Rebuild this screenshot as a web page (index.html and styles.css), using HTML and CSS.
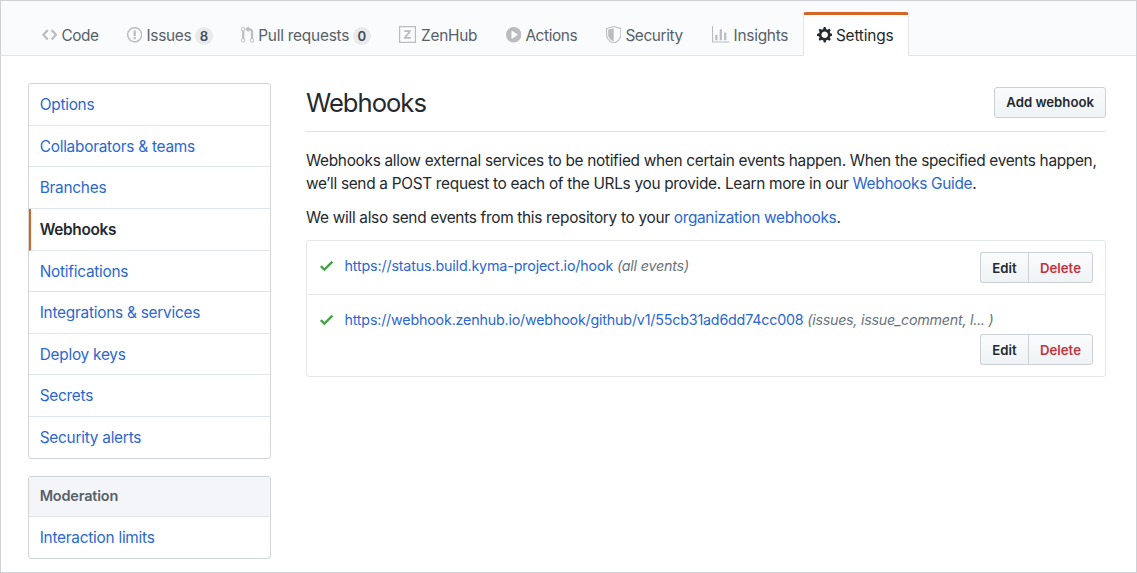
FILE: index.html
```html
<!DOCTYPE html>
<html lang="en">
<head>
<meta charset="utf-8">
<title>Webhooks</title>
<link rel="stylesheet" href="styles.css">
</head>
<body>
<div class="page">
  <nav class="tabs">
    <a class="tab tab-code"><svg class="icon" width="15.4" height="17.6" viewBox="0 0 14 16"><path d="M9.5 3L8 4.5 11.5 8 8 11.5 9.5 13 14 8 9.500 3zm-5 0L0 8l4.500 5L6 11.500 2.500 8 6 4.500 4.500 3z"/></svg><span>Code</span></a>
    <a class="tab tab-issues"><svg class="icon" width="15.4" height="17.6" viewBox="0 0 14 16"><path d="M7 2.300c3.140 0 5.700 2.560 5.700 5.700s-2.560 5.700-5.700 5.700A5.710 5.710 0 0 1 1.300 8c0-3.140 2.560-5.700 5.700-5.700zM7 1C3.140 1 0 4.140 0 8s3.140 7 7 7 7-3.140 7-7-3.140-7-7-7zm1 3H6v5h2V4zm0 6H6v2h2v-2z"/></svg><span>Issues</span><span class="count">8</span></a>
    <a class="tab tab-pulls"><svg class="icon" width="13.2" height="17.6" viewBox="0 0 12 16"><path d="M11 11.280V5c-.030-.780-.340-1.470-.940-2.060C9.460 2.350 8.780 2.030 8 2H7V0L4 3l3 3V4h1c.270.020.480.110.690.310.210.200.300.420.310.690v6.280A1.993 1.993 0 0 0 10 15a1.993 1.993 0 0 0 1-3.720zm-1 2.920c-.660 0-1.200-.550-1.200-1.200 0-.650.550-1.200 1.200-1.200.650 0 1.200.550 1.200 1.200 0 .650-.550 1.200-1.200 1.200zM4 3c0-1.110-.890-2-2-2a1.993 1.993 0 0 0-1 3.720v6.560A1.993 1.993 0 0 0 2 15a1.993 1.993 0 0 0 1-3.720V4.720c.590-.340 1-.980 1-1.720zm-.800 10c0 .660-.550 1.200-1.200 1.200-.650 0-1.200-.550-1.200-1.200 0-.650.550-1.200 1.200-1.200.650 0 1.200.550 1.200 1.200zM2 4.200C1.340 4.200.8 3.650.8 3c0-.650.550-1.200 1.200-1.200.650 0 1.200.550 1.200 1.200 0 .650-.550 1.200-1.200 1.200z"/></svg><span>Pull requests</span><span class="count">0</span></a>
    <a class="tab tab-zenhub"><svg class="icon" width="17" height="17" viewBox="0 0 17 17"><path d="M0 0h17v17H0zM1.200 1.200v14.600h14.600V1.200z" fill-rule="evenodd"/><path d="M5.300 4.200h6.500v1.500L7.500 11.100h4.400v1.700H5v-1.500l4.300-5.400h-4z"/></svg><span>ZenHub</span></a>
    <a class="tab tab-actions"><svg class="icon" width="15.4" height="17.6" viewBox="0 0 14 16"><path d="M14 8A7 7 0 1 1 0 8a7 7 0 0 1 14 0zm-8.223 3.482l4.599-3.066a.500.500 0 0 0 0-.832L5.777 4.518A.5.500 0 0 0 5 4.934v6.132a.500.500 0 0 0 .777.416z" fill-rule="evenodd"/></svg><span>Actions</span></a>
    <a class="tab tab-security"><svg class="icon" width="15.4" height="17.6" viewBox="0 0 14 16"><path d="M0 2l7-2 7 2v6.020C14 12.690 8.690 16 7 16c-1.690 0-7-3.310-7-7.980V2zm1 .750L7 1l6 1.750v5.268C13 12.104 8.449 15 7 15c-1.449 0-6-2.896-6-6.982V2.750zm1 .750L7 2v12c-1.207 0-5-2.482-5-5.985V3.500z" fill-rule="evenodd"/></svg><span>Security</span></a>
    <a class="tab tab-insights"><svg class="icon" width="17.6" height="17.6" viewBox="0 0 16 16"><path d="M16 14v1H0V0h1v14h15zM5 13H3V8h2v5zm4 0H7V3h2v10zm4 0h-2V6h2v7z"/></svg><span>Insights</span></a>
    <a class="tab tab-settings"><svg class="icon" width="15.4" height="17.6" viewBox="0 0 14 16"><path d="M14 8.770v-1.600l-1.940-.640-.450-1.090.880-1.840-1.130-1.130-1.810.910-1.090-.450-.690-1.920h-1.600l-.630 1.940-1.110.450-1.840-.880-1.130 1.130.910 1.810-.450 1.090L0 7.230v1.590l1.940.640.450 1.090-.880 1.840 1.130 1.130 1.810-.910 1.090.450.690 1.920h1.590l.630-1.940 1.110-.450 1.840.880 1.130-1.130-.920-1.810.470-1.090L14 8.750v.020zM7 11c-1.660 0-3-1.340-3-3s1.340-3 3-3 3 1.340 3 3-1.340 3-3 3z"/></svg><span>Settings</span></a>
  </nav>
  <div class="layout">
    <aside class="sidebar">
      <div class="menu">
        <a class="item">Options</a>
        <a class="item">Collaborators &amp; teams</a>
        <a class="item">Branches</a>
        <a class="item current">Webhooks</a>
        <a class="item">Notifications</a>
        <a class="item">Integrations &amp; services</a>
        <a class="item">Deploy keys</a>
        <a class="item">Secrets</a>
        <a class="item">Security alerts</a>
      </div>
      <div class="menu">
        <div class="item heading">Moderation</div>
        <a class="item">Interaction limits</a>
      </div>
    </aside>
    <main class="content">
      <header class="subhead">
        <h1>Webhooks</h1>
        <button class="btn">Add webhook</button>
      </header>
      <p>Webhooks allow external services to be notified when certain events happen. When the specified events happen,<br>we’ll send a POST request to each of the URLs you provide. Learn more in our <a>Webhooks Guide</a>.</p>
      <p>We will also send events from this repository to your <a>organization webhooks</a>.</p>
      <ul class="hooks">
        <li class="hook">
          <svg class="check" width="13.2" height="17.6" viewBox="0 0 12 16"><path d="M12 5l-8 8-4-4 1.500-1.500L4 10l6.500-6.500L12 5z"/></svg>
          <div class="hook-text"><a class="url">https://status.build.kyma-project.io/hook</a> <em>(all events)</em></div>
          <div class="group"><button class="btn">Edit</button><button class="btn danger">Delete</button></div>
        </li>
        <li class="hook stacked">
          <svg class="check" width="13.2" height="17.6" viewBox="0 0 12 16"><path d="M12 5l-8 8-4-4 1.500-1.500L4 10l6.500-6.500L12 5z"/></svg>
          <div class="hook-text"><a class="url">https://webhook.zenhub.io/webhook/github/v1/55cb31ad6dd74cc008</a> <em>(issues, issue_comment, l... )</em></div>
          <div class="group"><button class="btn">Edit</button><button class="btn danger">Delete</button></div>
        </li>
      </ul>
    </main>
  </div>
</div>
</body>
</html>
```
FILE: styles.css
```css
* { box-sizing: border-box; }

body {
  margin: 0;
  font: 15.4px/23px Inter, "Liberation Sans", sans-serif;
  letter-spacing: -0.25px;
  color: #24292e;
  background: #fff;
}

.page {
  height: 573px;
  border: 1px solid #d0d1d4;
  overflow: hidden;
}

.tabs {
  display: flex;
  align-items: flex-end;
  height: 55px;
  padding-left: 27px;
  background: #fafbfc;
  border-bottom: 1px solid #e1e4e8;
}

.tab {
  display: flex;
  align-items: center;
  flex: none;
  height: 44px;
  padding: 2px 0 0 14px;
  margin-bottom: -1px;
  color: #586069;
  white-space: nowrap;
}

.icon {
  flex: none;
  margin: -1px 4px 0 0;
  fill: #babcbf;
}

.tab-code { width: 84px; letter-spacing: -0.4px; }
.tab-issues { width: 114px; padding-left: 15px; }
.tab-pulls { width: 158px; padding-left: 15px; letter-spacing: -0.22px; }
.tab-zenhub { width: 107px; padding-left: 15px; }
.tab-zenhub .icon { margin-right: 5px; }
.tab-actions { width: 100px; padding-left: 15px; letter-spacing: -0.4px; }
.tab-security { width: 106px; padding-left: 15px; letter-spacing: -0.4px; }
.tab-insights { width: 106px; padding-left: 15px; }
.tab-settings {
  width: 106px;
  height: 44px;
  padding: 0 0 1px 13px;
  color: #24292e;
  background: #fff;
  border: solid #e1e4e8;
  border-width: 3px 1px 0;
  border-top-color: #d66424;
  border-radius: 3px 3px 0 0;
  letter-spacing: -0.18px;
}
.tab-settings .icon { margin-right: 3.5px; fill: #24292e; }

.count {
  width: 18px;
  height: 18px;
  margin: 1px 0 0 3.5px;
  border-radius: 9px;
  background: #e9eaec;
  color: #444d56;
  font-size: 13.2px;
  font-weight: 600;
  line-height: 18px;
  text-align: center;
}

.layout {
  display: flex;
  gap: 35px;
  padding: 27px 30px 0 27px;
}

.sidebar { width: 243px; flex: none; }

.menu {
  margin-bottom: 17px;
  border: 1px solid #d1d5da;
  border-radius: 3px;
  overflow: hidden;
}

.item {
  display: block;
  height: 41.65px;
  padding: 9px 10.7px 0;
  border-bottom: 1px solid #e1e4e8;
  color: #2b67cf;
}
.item:last-child { height: 40.8px; border-bottom: 0; }

.current {
  padding-left: 8.7px;
  border-left: 2px solid #d66424;
  color: #24292e;
  font-weight: 600;
  letter-spacing: -0.32px;
}

.heading {
  height: 40px;
  padding-top: 7px;
  background: #f3f5f8;
  color: #586069;
  font-size: 14.5px;
  font-weight: 600;
  letter-spacing: -0.2px;
}

.content { flex: 1; min-width: 0; }

.subhead {
  display: flex;
  justify-content: space-between;
  height: 49px;
  margin-bottom: 17px;
  padding-top: 4px;
  border-bottom: 1px solid #e1e4e8;
}

h1 {
  margin: 0;
  font-size: 25.6px;
  font-weight: 400;
  line-height: 32px;
  letter-spacing: -1px;
}

p { margin: 0 0 11px; white-space: nowrap; letter-spacing: -0.305px; }

a { color: #2b67cf; }

.btn {
  height: 31px;
  padding: 0 11px;
  border: 1px solid #cdd0d4;
  border-radius: 3px;
  background: linear-gradient(#fafbfc, #eff3f6);
  color: #24292e;
  font: 600 13.2px/20px Inter, sans-serif;
}
.subhead .btn { padding-bottom: 2px; }

.hooks {
  margin: 0;
  padding: 0;
  border: 1px solid #e6e7e9;
  border-radius: 3px;
  list-style: none;
}

.hook {
  display: flex;
  height: 53px;
  padding: 11px 12px 0 13px;
  font-size: 14.3px;
}
.hook + .hook { border-top: 1px solid #e6e7e9; }

.check { flex: none; margin: 5px 11.3px 0 0; fill: #45a048; }

.hook-text { flex: 1; margin-top: 2px; white-space: nowrap; }

em { color: #6a737d; letter-spacing: -0.2px; }

.url { letter-spacing: -0.16px; }
.stacked .url { letter-spacing: -0.2px; }
.stacked em { letter-spacing: -0.27px; }

.group { display: flex; }
.group .btn:first-child { width: 48px; border-right: 0; border-radius: 3px 0 0 3px; }
.group .btn:last-child { width: 65px; border-radius: 0 3px 3px 0; }
.group .danger { color: #c4333b; }

.stacked { height: 82px; flex-wrap: wrap; align-content: flex-start; }
.stacked .hook-text { flex: 0 0 740px; }
.stacked .group { margin: 3px 0 0 auto; }
```
